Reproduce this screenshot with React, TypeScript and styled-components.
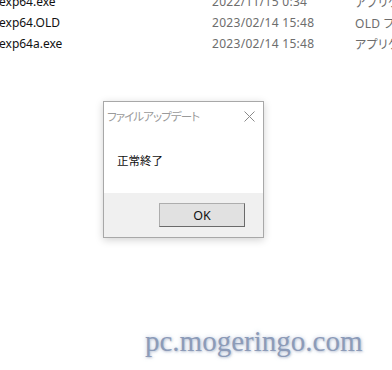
import React from 'react';
import styled, { createGlobalStyle } from 'styled-components';

const GlobalStyle = createGlobalStyle`
  html, body {
    margin: 0;
    padding: 0;
    background: #ffffff;
  }
`;

const Screen = styled.div`
  position: relative;
  width: 392px;
  height: 370px;
  overflow: hidden;
  background: #ffffff;
  font-family: "Noto Sans", "Noto Sans CJK JP", sans-serif;
  font-feature-settings: "palt";
`;

const FileList = styled.div`
  display: flex;
  flex-direction: column;
  margin-top: -9px;
  margin-left: -1px;
`;

const FileRow = styled.div`
  display: grid;
  grid-template-columns: 213px 143px 60px;
  height: 21px;
  align-items: center;
  font-size: 12px;
  white-space: nowrap;
`;

const FileName = styled.span`
  color: #111111;
`;

const FileMeta = styled.span`
  color: #6d6d6d;
  letter-spacing: 0.3px;
  overflow: hidden;
`;

const Dialog = styled.div`
  position: absolute;
  left: 103px;
  top: 101px;
  width: 159px;
  height: 135px;
  display: flex;
  flex-direction: column;
  border: 1px solid #a8a8a8;
  background: #ffffff;
  box-shadow: 0 2px 8px rgba(0, 0, 0, 0.18);
`;

const TitleBar = styled.div`
  display: flex;
  align-items: center;
  justify-content: space-between;
  height: 28px;
  padding: 0 8px 0 3px;
  font-size: 11.5px;
  letter-spacing: -0.9px;
  color: #9a9a9a;
`;

const CloseIcon = styled.svg`
  width: 11px;
  height: 11px;
`;

const Message = styled.div`
  flex: 1;
  padding: 22px 0 0 13px;
  font-size: 11.5px;
  color: #111111;
`;

const Footer = styled.div`
  display: flex;
  justify-content: flex-end;
  height: 44px;
  padding: 10px 18px 0 0;
  box-sizing: border-box;
  background: #f0f0f0;
`;

const Button = styled.button`
  width: 86px;
  height: 24px;
  padding: 0;
  border: 1px solid #adadad;
  border-right-color: #6a6a6a;
  border-bottom-color: #6a6a6a;
  background: #e1e1e1;
  font-family: "Noto Sans", sans-serif;
  font-size: 12.5px;
  color: #111111;
`;

const Watermark = styled.div`
  position: absolute;
  left: 145px;
  top: 325px;
  font-family: "Liberation Serif", serif;
  font-size: 29px;
  color: #8c9bb8;
  text-shadow: 0 0 4px rgba(170, 185, 215, 0.7), 1px 1px 2px rgba(140, 150, 170, 0.45);
`;

const files = [
  { name: 'exp64.exe', date: '2022/11/15 0:34', type: 'アプリケーション' },
  { name: 'exp64.OLD', date: '2023/02/14 15:48', type: 'OLD ファイル' },
  { name: 'exp64a.exe', date: '2023/02/14 15:48', type: 'アプリケーション' },
];

export default function App() {
  return (
    <Screen>
      <GlobalStyle />
      <FileList>
        {files.map((f) => (
          <FileRow key={f.name}>
            <FileName>{f.name}</FileName>
            <FileMeta>{f.date}</FileMeta>
            <FileMeta>{f.type}</FileMeta>
          </FileRow>
        ))}
      </FileList>

      <Dialog>
        <TitleBar>
          <span>ファイルアップデート</span>
          <CloseIcon viewBox="0 0 11 11">
            <path d="M0.5 0.5 L10.5 10.5 M10.5 0.5 L0.5 10.5" stroke="#8a8a8a" strokeWidth="1" fill="none" />
          </CloseIcon>
        </TitleBar>
        <Message>正常終了</Message>
        <Footer>
          <Button>OK</Button>
        </Footer>
      </Dialog>

      <Watermark>pc.mogeringo.com</Watermark>
    </Screen>
  );
}
